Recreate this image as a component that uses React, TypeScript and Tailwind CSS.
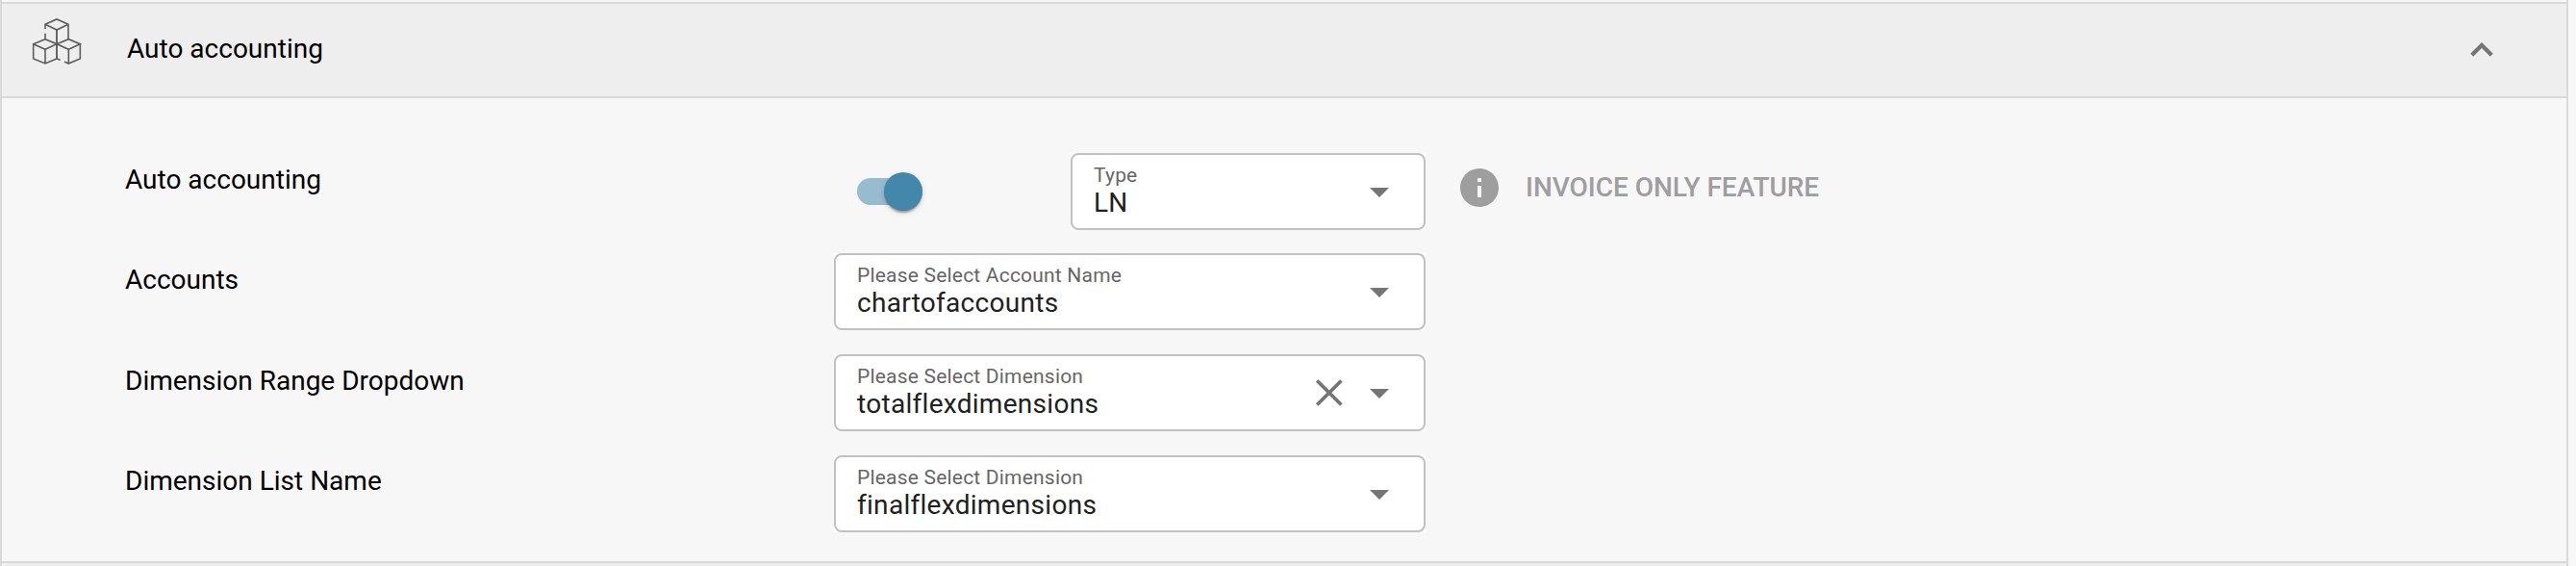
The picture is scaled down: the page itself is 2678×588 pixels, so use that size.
import type { ReactNode } from "react";

function CubesIcon() {
  return (
    <svg className="h-[50px] w-[52px]" viewBox="0 0 156 150" fill="none" stroke="#5c5c5c" strokeWidth="4.8">
      <path d="M42 36V22L78 6L114 22V68M42 50V68M42 22L78 39L114 22" />
      <path d="M78 39V130" strokeWidth="5.6" />
      <path d="M42 68L5 83V129L42 144L78 129M42 68L78 83L42 100L5 83M42 100V144" />
      <path d="M78 83L115 68L151 83L115 100L78 83M151 83V129L115 144V100M78 129L89 133M102 139L115 144" />
    </svg>
  );
}

function Toggle() {
  return (
    <div className="relative mt-[26px] ml-6 h-7 w-[68px] rounded-full bg-[#97bbcf]">
      <div className="absolute -top-1.5 right-0 size-10 rounded-full bg-[#4387aa] shadow-[0_4px_2px_-2px_rgba(0,0,0,0.2),0_2px_2px_0_rgba(0,0,0,0.14),0_2px_6px_0_rgba(0,0,0,0.12)]" />
    </div>
  );
}

type FieldProps = { label: string; value: string; clearable?: boolean; narrow?: boolean };

function SelectField({ label, value, clearable, narrow }: FieldProps) {
  return (
    <div className={narrow ? "w-[369px] bg-white" : "w-[615px] bg-white"}>
      <div className="flex h-20 items-center rounded-lg border-2 border-[#c1c1c1] pr-9 pl-[22px]">
        <div className="flex h-full flex-1 flex-col pt-[7px]">
          <span className="h-[27px] text-[21px] leading-7 tracking-[0.2px] text-[#666666]">{label}</span>
          <span className="h-8 text-[28px] leading-8 tracking-[0.29px] text-[#212121]">{value}</span>
        </div>
        {clearable && (
          <svg className="mr-7 h-7 w-[29px]" viewBox="0 0 29 28" fill="none" stroke="#757575" strokeWidth="3.8">
            <path d="M2.2 1.5L27.4 26.5M27.4 1.5L2.2 26.5" />
          </svg>
        )}
        <svg className="mt-0.5 h-2.5 w-5" viewBox="0 0 20 10" fill="#757575">
          <path d="M0 0H20L10 10Z" />
        </svg>
      </div>
    </div>
  );
}

function Row({ label, last, children }: { label: string; last?: boolean; children: ReactNode }) {
  return (
    <div className="flex h-20 pl-32 text-[28px] leading-10 text-black">
      <div className={last ? "w-[737px] pt-[7px]" : "w-[737px] pt-2"}>{label}</div>
      {children}
    </div>
  );
}

export default function App() {
  return (
    <div className="h-[588px] bg-[#f7f7f7] font-['Roboto',sans-serif]">
      <div className="flex h-full w-[2670px] flex-col border-x-2 border-[#d9d9d9] pt-0.5">
        <header className="flex h-[100px] shrink-0 items-center border-y-2 border-[#d9d9d9] bg-[#eeeeee] pr-[76px] pl-[31px]">
          <div className="mb-[18px]">
            <CubesIcon />
          </div>
          <h2 className="mb-0.5 ml-[47px] flex-1 text-[28px] leading-10 text-black">Auto accounting</h2>
          <svg className="mb-0.5 h-4 w-6" viewBox="0 0 24 16" fill="none" stroke="#757575" strokeWidth="4.2">
            <path d="M1.7 14.3L12 4L22.3 14.3" />
          </svg>
        </header>
        <main className="flex h-[481px] shrink-0 flex-col pt-[57px]">
          <Row label="Auto accounting">
            <Toggle />
            <div className="ml-[154px]">
              <SelectField label="Type" value="LN" narrow />
            </div>
            <div className="ml-8 flex h-[72px] items-center text-[#9e9e9e]">
              <svg className="size-12" viewBox="0 0 24 24" fill="currentColor">
                <path d="M12 2C6.48 2 2 6.48 2 12s4.48 10 10 10 10-4.48 10-10S17.52 2 12 2zm1 15h-2v-6h2v6zm0-8h-2V7h2v2z" />
              </svg>
              <span className="ml-6 font-medium tracking-[-0.03px]">INVOICE ONLY FEATURE</span>
            </div>
          </Row>
          <div className="h-6" />
          <Row label="Accounts">
            <SelectField label="Please Select Account Name" value="chartofaccounts" />
          </Row>
          <div className="h-[25px]" />
          <Row label="Dimension Range Dropdown">
            <SelectField label="Please Select Dimension" value="totalflexdimensions" clearable />
          </Row>
          <div className="h-[25px]" />
          <Row label="Dimension List Name" last>
            <SelectField label="Please Select Dimension" value="finalflexdimensions" />
          </Row>
        </main>
        <div className="flex-1 border-t-2 border-[#d9d9d9] bg-[#eeeeee]" />
      </div>
    </div>
  );
}
